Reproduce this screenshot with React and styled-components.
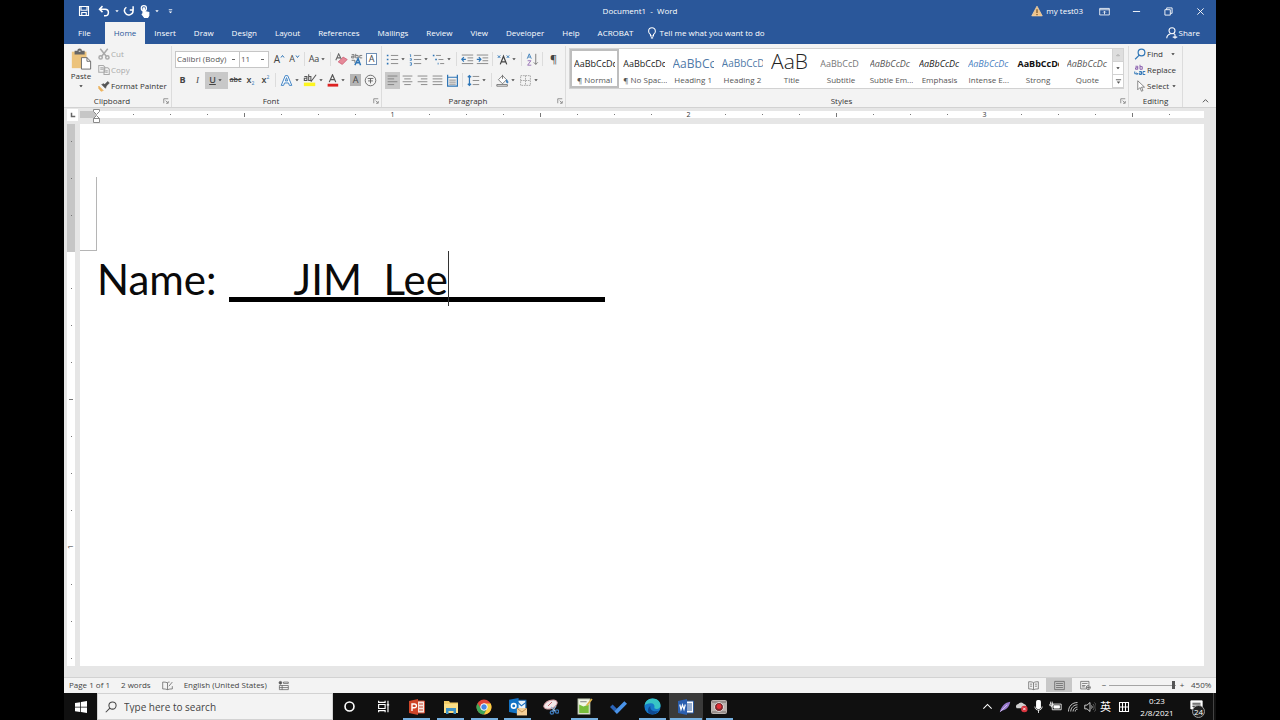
import React, { useState } from 'react'
import styled, { createGlobalStyle } from 'styled-components'

const tabs = ['File', 'Home', 'Insert', 'Draw', 'Design', 'Layout', 'References', 'Mailings', 'Review', 'View', 'Developer', 'Help', 'ACROBAT'];

const styleItems = [
  { name: '¶ Normal', sample: 'AaBbCcDc' },
  { name: '¶ No Spac...', sample: 'AaBbCcDc' },
  { name: 'Heading 1', sample: 'AaBbCc', size: 12, color: '#4f7aa8' },
  { name: 'Heading 2', sample: 'AaBbCcD', size: 10, color: '#4f7aa8' },
  { name: 'Title', sample: 'AaB', size: 21, color: '#222', weight: 300 },
  { name: 'Subtitle', sample: 'AaBbCcD', color: '#777' },
  { name: 'Subtle Em...', sample: 'AaBbCcDc', color: '#555', italic: true },
  { name: 'Emphasis', sample: 'AaBbCcDc', color: '#222', italic: true },
  { name: 'Intense E...', sample: 'AaBbCcDc', color: '#4a7fc1', italic: true },
  { name: 'Strong', sample: 'AaBbCcDc', color: '#111', weight: 700 },
  { name: 'Quote', sample: 'AaBbCcDc', color: '#555', italic: true },
];

const topMarks = Array.from({ length: 29 }, (_, i) => i + 1);
const sideMarks = Array.from({ length: 11 }, (_, i) => i + 1);

const Arrow = () => <ArrowSvg viewBox="0 0 8 8"><path d="M2.300 3.200h3.400L4 5.200z" /></ArrowSvg>;

const Launcher = () => (
  <Corner aria-label="More options">
    <Icon viewBox="0 0 8 8" $size={6}><path d="M1 7V1h6M3.500 3.500L6.500 6.500M7 4v3H4" /></Icon>
  </Corner>
);

const Lines = ({ d, blue, children }) => (
  <Icon viewBox="0 0 16 16" $size={13} $color="#777">
    <path d={d} />
    {blue && <path d={blue} stroke="#2e75b6" strokeWidth="2" />}
    {children}
  </Icon>
);

function TitleBar() {
  return (
    <Title>
      <Quick>
        <TopButton $w={20} aria-label="Save"><Icon viewBox="0 0 16 16" $size={12} $stroke={1.5}><path d="M2 2h12v12H2zM4 2v5h8V2M5 14v-4h6v4" /></Icon></TopButton>
        <TopButton $w={19} aria-label="Undo"><Icon viewBox="0 0 16 16" $size={12} $stroke={2}><path d="M6 1.500L2 5.500l4 4M2.500 5.500h7a4.400 4.400 0 0 1 0 8.800H8" /></Icon></TopButton>
        <Arrow />
        <TopButton $w={16} aria-label="Redo"><Icon viewBox="0 0 16 16" $size={12} $stroke={2}><path d="M13.500 1.500v5H9M4.500 3A5.600 5.600 0 1 0 13 6" /></Icon></TopButton>
        <TopButton $w={16} aria-label="Touch mode"><Icon viewBox="0 0 16 16" $size={13} $stroke={1.5}><circle cx="6" cy="4" r="3.200" /><path d="M5 12V4.500a1 1 0 0 1 2 0V8l5 1.200V13l-1.500 2.500H7L3.500 11z" fill="currentColor" /></Icon></TopButton>
        <Arrow />
        <TopButton $w={19} aria-label="Customize toolbar"><Icon viewBox="0 0 8 8" $size={7}><path d="M2 2h4" /><path d="M2 4h4L4 6z" fill="currentColor" stroke="none" /></Icon></TopButton>
      </Quick>
      <DocTitle>Document1&nbsp; -&nbsp; Word</DocTitle>
      <WindowControls>
        <Icon viewBox="0 0 16 16" $size={12}><path d="M8 1.500L15 14.500H1z" fill="#f0c48a" stroke="#f5d5a8" /><path d="M8 5.500v5M8 12v1.500" stroke="#6b4a22" strokeWidth="1.500" /></Icon>
        <User>my test03</User>
        <TopButton $w={32} aria-label="Ribbon display options"><Icon viewBox="0 0 16 12" $size={11} $stroke={1.2}><path d="M1 1.500h14v9.500H1zM1 3.500h14M8 10V6M6 7.500L8 5.500l2 2" /></Icon></TopButton>
        <TopButton $w={32} aria-label="Minimize"><Icon viewBox="0 0 10 10" $size={9}><path d="M1 5h8" /></Icon></TopButton>
        <TopButton $w={32} aria-label="Restore"><Icon viewBox="0 0 10 10" $size={9}><path d="M1 3h6v6H1zM3 3V1h6v6H7" /></Icon></TopButton>
        <TopButton $w={32} aria-label="Close"><Icon viewBox="0 0 10 10" $size={9}><path d="M1.500 1.500l7 7M8.500 1.500l-7 7" /></Icon></TopButton>
      </WindowControls>
    </Title>
  );
}

function Clipboard() {
  return (
    <Group $w={108}>
      <GroupBody>
        <PasteButton>
          <Icon viewBox="0 0 24 24" $size={22}>
            <path d="M2 4h16v18H2z" fill="#ecc37c" stroke="none" />
            <path d="M5 3h3a2.500 2.500 0 0 1 5 0h3v4H5z" fill="#666" stroke="none" />
            <path d="M9.500 3.500h2" stroke="#fff" />
            <path d="M12.500 10.500h6l4 4v8.500h-10z" fill="#fff" stroke="#666" />
            <path d="M18.500 10.500v4h4" stroke="#666" />
          </Icon>
          Paste
          <Arrow />
        </PasteButton>
        <Stack>
          <TextButton disabled>
            <Icon viewBox="0 0 16 16" $size={12} $stroke={2}><path d="M3 1l8 10M13 1L5 11" /><circle cx="3.500" cy="12.500" r="2.200" /><circle cx="12.500" cy="12.500" r="2.200" /></Icon>Cut
          </TextButton>
          <TextButton disabled>
            <Icon viewBox="0 0 16 16" $size={12} $stroke={1.4}><path d="M1 2h6l2 2v7H1zM3 5h4M3 7h4M8 5h5l2 2v7H8zM10 9h3M10 11h3" /></Icon>Copy
          </TextButton>
          <TextButton>
            <Icon viewBox="0 0 16 16" $size={12}><path d="M1 8l6 6-3 1-3-4z" fill="#ecb35f" stroke="#ecb35f" /><path d="M5 6l5 5 1-3-3-3zM9 6l4-4 2 2-4 4z" fill="#555" stroke="#555" /></Icon>Format Painter
          </TextButton>
        </Stack>
      </GroupBody>
      <GroupLabel>Clipboard<Launcher /></GroupLabel>
    </Group>
  );
}

function FontGroup() {
  return (
    <Group $w={210}>
      <Rows>
        <Row>
          <Combo $w={65} aria-label="Font" defaultValue="Calibri (Body)"><option>Calibri (Body)</option></Combo>
          <Combo $w={29} aria-label="Font size" defaultValue="11"><option>11</option></Combo>
          <Tool aria-label="Grow font"><Letter $size={10}>A</Letter><Caps viewBox="0 0 5 5"><path d="M1 3.500l1.500-2 1.500 2" /></Caps></Tool>
          <Tool aria-label="Shrink font"><Letter $size={9}>A</Letter><Caps viewBox="0 0 5 5"><path d="M1 1.500l1.500 2 1.500-2" /></Caps></Tool>
          <Sep />
          <Tool $w={20} aria-label="Change case"><Letter $size={9}>Aa</Letter><Arrow /></Tool>
          <Sep />
          <Tool aria-label="Clear formatting"><Icon viewBox="0 0 16 16" $size={13}><path d="M4 11l6-6 5 3-6 6z" fill="#e58a99" stroke="#cf5f75" /><path d="M1 9L4.500 1l3 6M2.500 6h4" stroke="#666" strokeWidth="1.300" /></Icon></Tool>
          <Tool aria-label="Phonetic guide"><Icon viewBox="0 0 16 16" $size={13}><path d="M2 2h3v4H2V4h3M7 1v5h3V3H7M15 3h-3v3h3" stroke="#666" /><path d="M6 15l4-8 3 8M8 12h4" stroke="#2e75b6" strokeWidth="1.800" /><path d="M2 9h4v3" stroke="#666" /></Icon></Tool>
          <Tool aria-label="Character border"><Boxed>A</Boxed></Tool>
        </Row>
        <Row>
          <Tool aria-label="Bold"><Letter $weight={700}>B</Letter></Tool>
          <Tool aria-label="Italic"><Letter $italic $serif>I</Letter></Tool>
          <Tool $w={23} $active aria-label="Underline"><Letter $underline $weight={600}>U</Letter><Arrow /></Tool>
          <Tool aria-label="Strikethrough"><Letter $size={7} $strike $weight={600}>abc</Letter></Tool>
          <Tool aria-label="Subscript"><Letter $weight={600}>x</Letter><Sub>2</Sub></Tool>
          <Tool aria-label="Superscript"><Letter $weight={600}>x</Letter><Sup>2</Sup></Tool>
          <Sep />
          <Tool $w={23} aria-label="Text effects"><Icon viewBox="0 0 16 16" $size={13} $color="#3f83c4" $stroke={1.2}><path d="M1.500 14L6.500 2h3l5 12h-3l-1-3h-5l-1 3zM6.500 8.500h3L8 4.500z" fill="#fff" /></Icon><Arrow /></Tool>
          <Tool $w={23} aria-label="Highlight"><Icon viewBox="0 0 16 16" $size={14} $color="#555"><path d="M1 11h13v4H1z" fill="#fdf51f" stroke="none" /><path d="M1.500 4h3v4.500h-3V6h3M6.500 1.500v7h2.500V4H6.500M9 10l6-8" strokeWidth="1.200" /></Icon><Arrow /></Tool>
          <Tool $w={23} aria-label="Font color"><Icon viewBox="0 0 16 16" $size={13} $color="#555" $stroke={1.5}><path d="M4 10l4-9 4 9M5.500 7h5" /><path d="M2 12h13v3.500H2z" fill="#d22" stroke="none" /></Icon><Arrow /></Tool>
          <Tool aria-label="Character shading"><Boxed $shade>A</Boxed></Tool>
          <Tool aria-label="Enclose characters"><Icon viewBox="0 0 16 16" $size={13} $color="#555"><circle cx="8" cy="8" r="6.500" /><path d="M4.500 5.500h7M5 8.500h6M8 5.500v6" /></Icon></Tool>
        </Row>
      </Rows>
      <GroupLabel>Font<Launcher /></GroupLabel>
    </Group>
  );
}

function ParagraphGroup() {
  return (
    <Group $w={184}>
      <Rows>
        <Row>
          <Tool $w={23} aria-label="Bullets"><Lines d="M6 3h9M6 8h9M6 13h9" blue="M1 3h2M1 8h2M1 13h2" /><Arrow /></Tool>
          <Tool $w={23} aria-label="Numbering"><Lines d="M6 3h9M6 8h9M6 13h9"><path d="M1 2h1v3M1 7h2v2H1M1 12h2v3H1" stroke="#2e75b6" /></Lines><Arrow /></Tool>
          <Tool $w={23} aria-label="Multilevel list"><Lines d="M5 3h6M8 8h6M10 13h5" blue="M1 3h2M4 8h2M7 13h1" /><Arrow /></Tool>
          <Sep />
          <Tool aria-label="Decrease indent"><Lines d="M1 2.500h14M8 6h7M8 9.500h7M1 13h14"><path d="M6 7.800H1M3.500 5L1 7.800l2.500 2.800" stroke="#2e75b6" strokeWidth="1.500" /></Lines></Tool>
          <Tool aria-label="Increase indent"><Lines d="M1 2.500h14M8 6h7M8 9.500h7M1 13h14"><path d="M1 7.800h5M3.500 5L6 7.800l-2.500 2.800" stroke="#2e75b6" strokeWidth="1.500" /></Lines></Tool>
          <Sep />
          <Tool $w={23} aria-label="Asian layout"><Lines><path d="M4 14l4-10 4 10M5.500 11h5" stroke="#444" strokeWidth="1.500" /><path d="M1 3l3 3M4 3L1 6M12 3l3 3M15 3l-3 3" stroke="#2e75b6" strokeWidth="1.200" /></Lines><Arrow /></Tool>
          <Sep />
          <Tool aria-label="Sort"><Icon viewBox="0 0 16 16" $size={13} $color="#666"><path d="M12 1v13M9.500 11.500L12 14l2.500-2.500" /><path d="M1.500 7L4 1l2.500 6M2.500 5h3" stroke="#2e75b6" /><path d="M2 9.500h4L2 15h4.500" stroke="#8a5fae" /></Icon></Tool>
          <Sep />
          <Tool aria-label="Show marks"><Letter $size={11}>¶</Letter></Tool>
        </Row>
        <Row>
          <Tool $active aria-label="Align left"><Lines d="M2 2.500h12M2 6h8M2 9.500h12M2 13h8" /></Tool>
          <Tool aria-label="Center"><Lines d="M2 2.500h12M4 6h8M2 9.500h12M4 13h8" /></Tool>
          <Tool aria-label="Align right"><Lines d="M2 2.500h12M6 6h8M2 9.500h12M6 13h8" /></Tool>
          <Tool aria-label="Justify"><Lines d="M2 2.500h12M2 6h12M2 9.500h12M2 13h12" /></Tool>
          <Tool aria-label="Distribute"><Lines d="M4 7.500h8M4 10h8M4 12.500h8"><path d="M2 1v14h12V1M2 4h12" stroke="#2e75b6" strokeWidth="1.500" /></Lines></Tool>
          <Sep />
          <Tool $w={23} aria-label="Line spacing"><Lines d="M7 3h8M7 8h8M7 13h8"><path d="M3 2v12M1 4l2-2 2 2M1 12l2 2 2-2" stroke="#2e75b6" strokeWidth="1.500" /></Lines><Arrow /></Tool>
          <Sep />
          <Tool $w={23} aria-label="Shading"><Icon viewBox="0 0 16 16" $size={13} $color="#666"><path d="M3 7l5-5 5 5-5 5z" fill="#fff" /><path d="M8 1v5" /><path d="M13 7c2 2 2 4 1 4s-1.500-2-1-4" fill="#2e75b6" stroke="#2e75b6" /><path d="M1 13h13v2H1z" /></Icon><Arrow /></Tool>
          <Tool $w={23} aria-label="Borders"><Icon viewBox="0 0 16 16" $size={13} $color="#999"><path d="M2 2h12v12H2zM8 2v12M2 8h12" strokeDasharray="2 1" /></Icon><Arrow /></Tool>
        </Row>
      </Rows>
      <GroupLabel>Paragraph<Launcher /></GroupLabel>
    </Group>
  );
}

function StylesGroup() {
  return (
    <Group $grow>
      <Gallery>
        {styleItems.map((item, i) => (
          <StyleCard key={item.name} $selected={i === 0}>
            <Sample $size={item.size} $color={item.color} $weight={item.weight} $italic={item.italic}>{item.sample}</Sample>
            <StyleName>{item.name}</StyleName>
          </StyleCard>
        ))}
        <GalleryScroll>
          <ScrollButton $off aria-label="Scroll up"><Icon viewBox="0 0 8 8" $size={6} $color="#aaa"><path d="M2 5l2-2 2 2z" /></Icon></ScrollButton>
          <ScrollButton aria-label="Scroll down"><Arrow /></ScrollButton>
          <ScrollButton aria-label="More styles"><Icon viewBox="0 0 8 8" $size={7} $color="#555"><path d="M1 2h6" /><path d="M2 4h4L4 6.500z" fill="#555" stroke="none" /></Icon></ScrollButton>
        </GalleryScroll>
      </Gallery>
      <GroupLabel>Styles<Launcher /></GroupLabel>
    </Group>
  );
}

function EditingGroup() {
  return (
    <Group $w={54}>
      <GroupBody>
        <Stack $pad>
          <TextButton><Icon viewBox="0 0 16 16" $size={12} $color="#2e75b6" $stroke={1.6}><circle cx="10" cy="6" r="4.500" /><path d="M7 9.500L1.500 15" /></Icon>Find<Gap /><Arrow /></TextButton>
          <TextButton><Icon viewBox="0 0 16 16" $size={12} $color="#666"><path d="M2 3h3v4H2V5h3M8 1v6h3V3.500H8" stroke="#8a5fae" strokeWidth="1.300" /><path d="M7 10h3v4H7v-2h3M15 10h-3v4h3M1 10v3h4M3.500 11.500L5 13l-1.500 1.500" stroke="#2e75b6" strokeWidth="1.300" /></Icon>Replace</TextButton>
          <TextButton><Icon viewBox="0 0 16 16" $size={12} $color="#666"><path d="M5 1v12l3-3 2 5 2-1-2-4.500h4z" fill="#fff" /></Icon>Select<Arrow /></TextButton>
        </Stack>
      </GroupBody>
      <GroupLabel $plain>Editing</GroupLabel>
    </Group>
  );
}

function StatusBar() {
  return (
    <Status>
      <StatusText>Page 1 of 1</StatusText>
      <StatusText>2 words</StatusText>
      <Icon viewBox="0 0 16 14" $size={11} $color="#555"><path d="M8 3v10M8 3C6 2 3 2 1 2v10c2 0 5 0 7 1 2-1 5-1 7-1V8M8 3c1-1 2-1 3-1M10 8l5-6" /></Icon>
      <StatusText>English (United States)</StatusText>
      <Icon viewBox="0 0 16 14" $size={11} $color="#555"><circle cx="3.500" cy="3" r="2" fill="#555" /><path d="M8 2h7v2H8zM2 7h13v6H2zM2 10h13M6 7v6" /></Icon>
      <Spacer />
      <Views>
        <ViewButton aria-label="Read mode"><Icon viewBox="0 0 16 14" $size={11} $color="#555"><path d="M8 3v10M8 3C6 1.500 3 1.500 1 1.500V12c2 0 5 0 7 1 2-1 5-1 7-1V1.500c-2 0-5 0-7 1.500M3 5h3M3 8h3M10 5h3M10 8h3" /></Icon></ViewButton>
        <ViewButton $active aria-label="Print layout"><Icon viewBox="0 0 16 14" $size={11} $color="#555"><path d="M1 1h14v12H1zM3 4h10M3 7h10M3 10h10" /></Icon></ViewButton>
        <ViewButton aria-label="Web layout"><Icon viewBox="0 0 16 14" $size={11} $color="#555"><path d="M9 12H1V1h12v5M3 4h8M3 7h5M3 9h4" /><circle cx="12" cy="10" r="3" /><path d="M12 7v6M9 10h6" /></Icon></ViewButton>
      </Views>
      <ZoomButton aria-label="Zoom out">−</ZoomButton>
      <ZoomRange type="range" min="10" max="500" defaultValue="490" aria-label="Zoom" />
      <ZoomButton aria-label="Zoom in">+</ZoomButton>
      <ZoomText>450%</ZoomText>
    </Status>
  );
}

function Taskbar() {
  return (
    <Bar>
      <Start aria-label="Start"><Icon viewBox="0 0 16 16" $size={12}><path d="M0 2.500l7-1v6H0zM8 1.300L16 0v7.500H8zM0 8.500h7v6l-7-1zM8 8.500h8V16l-8-1.300z" fill="#fff" stroke="none" /></Icon></Start>
      <Search>
        <Icon viewBox="0 0 16 16" $size={12} $color="#444" $stroke={1.4}><circle cx="10" cy="6" r="4.800" /><path d="M6.500 9.500L1 15" /></Icon>
        <SearchInput type="text" placeholder="Type here to search" aria-label="Type here to search" />
      </Search>
      <Apps>
        <TaskApp aria-label="Cortana"><Icon viewBox="0 0 16 16" $size={13} $stroke={2}><circle cx="8" cy="8" r="5.500" /></Icon></TaskApp>
        <TaskApp aria-label="Task view"><Icon viewBox="0 0 16 16" $size={13} $stroke={1.4}><path d="M2 1v2h8V1M2 5.500h8v5H2zM2 15v-2h8v2M13.500 1v14M12 6h3" /></Icon></TaskApp>
        <TaskApp $open aria-label="PowerPoint"><Icon viewBox="0 0 16 16" $size={16}><path d="M8 2h7.500v12H8z" fill="#f6e6e0" stroke="#c8442c" /><path d="M10 5h4M10 8h4M10 11h4" stroke="#c8442c" /><path d="M0 2l9-2v16l-9-2z" fill="#cf4528" stroke="none" /><path d="M3 12V5h2.500a1.800 1.800 0 0 1 0 3.800H3" stroke="#fff" strokeWidth="1.400" /></Icon></TaskApp>
        <TaskApp $open aria-label="File Explorer"><Icon viewBox="0 0 16 16" $size={16}><path d="M1 2h5l1 1.500h8V14H1z" fill="#f3cd67" stroke="none" /><path d="M1 5h14v9H1z" fill="#fbdf87" stroke="none" /><path d="M3 9h10v6h-2.500v-3h-5v3H3z" fill="#3f93c8" stroke="none" /></Icon></TaskApp>
        <TaskApp $open aria-label="Chrome"><Icon viewBox="0 0 16 16" $size={16}><circle cx="8" cy="8" r="7.500" fill="#e2463a" stroke="none" /><path d="M1.500 4.200A7.500 7.500 0 0 0 8 15.500L11 9.800 8 11.500 5 9.800z" fill="#3fa657" stroke="none" /><path d="M8 15.500A7.500 7.500 0 0 0 14.700 4.600H8l3 5.200z" fill="#f8d043" stroke="none" /><circle cx="8" cy="8" r="3.300" fill="#4588e6" stroke="#fff" /></Icon></TaskApp>
        <TaskApp $open aria-label="Outlook"><Icon viewBox="0 0 16 16" $size={18}><path d="M7 2h8v8H7z" fill="#e9f3fb" stroke="#1b6fbd" /><path d="M8 4l3 3 4-3" stroke="#1b6fbd" /><path d="M0 1.500L8.500 0v14L0 12.500z" fill="#1272c4" stroke="none" /><circle cx="4.200" cy="7" r="2" stroke="#fff" strokeWidth="1.400" /><path d="M7 9h9v6.500H7z" fill="#f5cf98" stroke="none" /><path d="M7 9l4.500 3.500L16 9" stroke="#b98644" strokeWidth=".800" /></Icon></TaskApp>
        <TaskApp aria-label="Snipping Tool"><Icon viewBox="0 0 16 16" $size={16}><ellipse cx="7.500" cy="5.500" rx="7" ry="4" fill="#f3e9ea" stroke="#d9a0a6" transform="rotate(-22 7.500 5.500)" /><path d="M5 7l4-4" stroke="#c9666f" /><path d="M8 8l5 5M13 7l-4 6" stroke="#9db9d6" strokeWidth="1.300" /><circle cx="9" cy="13.500" r="1.700" stroke="#3a75b5" strokeWidth="1.300" /><circle cx="14" cy="12.500" r="1.700" stroke="#3a75b5" strokeWidth="1.300" /></Icon></TaskApp>
        <TaskApp $open aria-label="Notes"><Icon viewBox="0 0 16 16" $size={17}><path d="M2 1h11v14H2z" fill="#f3f6e8" stroke="#ccd5bb" /><path d="M3 6l4 2 5-2v8H3z" fill="#78bd3b" stroke="none" /><path d="M4 3.500h6" stroke="#888" /><path d="M10 7l5-6" stroke="#e0b24a" strokeWidth="1.600" /></Icon></TaskApp>
        <TaskApp aria-label="To Do"><Icon viewBox="0 0 16 16" $size={17}><path d="M0 8.500l2.500-2.500L6.500 10l-2.500 2.500z" fill="#2a63b8" stroke="none" /><path d="M4 12.500L13.500 3 16 5.500l-9.500 9.500z" fill="#4a93e8" stroke="none" /></Icon></TaskApp>
        <TaskApp $open aria-label="Edge"><Icon viewBox="0 0 16 16" $size={17}><circle cx="8" cy="8" r="7.600" fill="#1678c9" stroke="none" /><path d="M.500 7.500C1 3 4 .400 8 .400c5 0 7.600 3.400 7.600 6.400 0 2.200-1.600 3.500-3.600 3.500-1.600 0-2.600-.600-2.200-1.500C10.300 7 9 5 6.500 5 3.500 5 1 6 .500 7.500z" fill="#37c4c5" stroke="none" /><path d="M6 7.500c-.500 4 3 6 8 4.500-2 2.500-5 4-8 3-3-1-3-6 0-7.500z" fill="#0e4a94" stroke="none" /></Icon></TaskApp>
        <TaskApp $open $current aria-label="Word"><Icon viewBox="0 0 16 16" $size={16}><path d="M8 2h7.500v12H8z" fill="#fff" stroke="#2a579a" /><path d="M9 5h5M9 7h5M9 9h5M9 11h5" stroke="#2a579a" /><path d="M0 2l9-2v16l-9-2z" fill="#2b5fb0" stroke="none" /><path d="M1.800 5.500L3 10.500l1.500-4.500L6 10.500l1.300-5" stroke="#fff" strokeWidth="1.200" /></Icon></TaskApp>
        <TaskApp $open aria-label="Recorder"><Icon viewBox="0 0 16 16" $size={16}><rect x="0" y="1" width="16" height="14" rx="2" fill="#b9b2ae" stroke="none" /><path d="M1 3h14M1 13h14" stroke="#776c6a" /><circle cx="8" cy="8" r="4.500" fill="#7e2a2d" stroke="#ddd" /><circle cx="8" cy="7.500" r="2.400" fill="#e32f36" stroke="none" /></Icon></TaskApp>
      </Apps>
      <Spacer />
      <Tray>
        <TrayItem><Icon viewBox="0 0 16 16" $size={11} $stroke={1.6}><path d="M2 11l6-6 6 6" /></Icon></TrayItem>
        <TrayItem><Icon viewBox="0 0 16 16" $size={12}><path d="M1 15C3 7 8 2 15 1c-1 7-6 11-11 12z" fill="#9b7bd0" stroke="none" /><path d="M2 14l9-9" stroke="#e2d8f2" /></Icon></TrayItem>
        <TrayItem><Icon viewBox="0 0 16 16" $size={13}><path d="M2 10a3 3 0 0 1 2-5 4 4 0 0 1 7 0 3 3 0 0 1 2 5z" fill="#d0d0d0" stroke="none" /><circle cx="11.500" cy="11" r="4" fill="#d8323c" stroke="none" /><path d="M10 9.500l3 3M13 9.500l-3 3" stroke="#fff" /></Icon></TrayItem>
        <TrayItem><Icon viewBox="0 0 16 16" $size={13}><rect x="5" y="0" width="6" height="11" rx="2" fill="#fff" stroke="none" /><path d="M3.500 8c0 6 9 6 9 0M8 12v4" /></Icon></TrayItem>
        <TrayItem><Icon viewBox="0 0 16 16" $size={13}><path d="M4 5h11v7H4zM2 2v3M4 2v3M1 5h4v2H1zM3 7v2" /><path d="M6 7h7v3H6z" fill="#fff" /></Icon></TrayItem>
        <TrayItem><Icon viewBox="0 0 16 16" $size={12}><path d="M2 14C2 7 7 2 14 2M5 14c0-5 4-9 9-9M8 14c0-3 3-6 6-6M11 14c0-2 1-3 3-3" /></Icon></TrayItem>
        <TrayItem><Icon viewBox="0 0 16 16" $size={12}><path d="M1 5.500h3L8 2v12l-4-3.500H1zM10 6c1 1 1 3 0 4" /><path d="M12 4c2 2 2 6 0 8M14 2c3 3 3 9 0 12" stroke="#777" /></Icon></TrayItem>
        <TrayItem $w={15}>英</TrayItem>
        <TrayItem $w={21}><Icon viewBox="0 0 16 16" $size={12} $stroke={1.4}><path d="M2 2h12v12H2zM2 8h12M6 2v12M10 2v12" /></Icon></TrayItem>
        <Clock><span>0:23</span><span>2/8/2021</span></Clock>
        <Notify aria-label="Notifications">
          <Icon viewBox="0 0 16 16" $size={13}><path d="M1 1h14v10H7l-3 3v-3H1z" fill="#fff" /><path d="M3 4h10M3 6h10M3 8h7" stroke="#222" /></Icon>
          <Badge>24</Badge>
        </Notify>
      </Tray>
    </Bar>
  );
}

function App() {
  const [active, setActive] = useState('Home');

  return <>
    <GlobalStyle />
    <Screen>
      <TitleBar />
      <TabBar>
        {tabs.map((tab) => (
          <Tab key={tab} $file={tab === 'File'} $active={tab === active} onClick={() => setActive(tab)}>{tab}</Tab>
        ))}
        <Tell>
          <Icon viewBox="0 0 16 16" $size={12} $stroke={1.4}><path d="M6 12V10C4.500 9 3.500 7.500 3.500 5.500a4.500 4.500 0 0 1 9 0C12.500 7.500 11.500 9 10 10v2zM6.500 14.500h3" /></Icon>
          Tell me what you want to do
        </Tell>
        <Spacer />
        <Share>
          <Icon viewBox="0 0 16 16" $size={12} $stroke={1.4}><circle cx="8" cy="5" r="4" /><path d="M1 15c0-3 2-5 5-6M10 9c1 0 2 1 2.500 2M9 13.500h6M12 10.500v5" /></Icon>
          Share
        </Share>
      </TabBar>
      <Ribbon>
        <Clipboard />
        <FontGroup />
        <ParagraphGroup />
        <StylesGroup />
        <EditingGroup />
        <Collapse aria-label="Collapse ribbon"><Icon viewBox="0 0 8 8" $size={7} $color="#444"><path d="M1 6l3-3 3 3" /></Icon></Collapse>
      </Ribbon>
      <Workspace>
        <RulerCorner><TabStop><Icon viewBox="0 0 8 8" $size={6} $color="#666" $stroke={2}><path d="M2 1v5h5" /></Icon></TabStop></RulerCorner>
        <TopRuler>
          <TopMargin>
            <Indent viewBox="0 0 7 14"><path d="M.500.500h6v2L3.500 5.500l-3-3zM3.500 6.500l3 3h-6zM.500 9.500h6v4h-6z" /></Indent>
          </TopMargin>
          <TopTicks>
            {topMarks.map((n) => <TopMark key={n}>{n % 8 === 0 ? n / 8 : <Tick $long={n % 4 === 0} />}</TopMark>)}
          </TopTicks>
        </TopRuler>
        <SideRuler>
          <SideMargin><SideMark><SideTick /></SideMark><SideMark><SideTick /></SideMark><SideMark><SideTick /></SideMark></SideMargin>
          <SideTicks>
            {sideMarks.map((n) => <SideMark key={n}>{n % 8 === 0 ? <SideNumber>{n / 8}</SideNumber> : <SideTick $long={n % 4 === 0} />}</SideMark>)}
          </SideTicks>
        </SideRuler>
        <Page>
          <CropMark />
          <Line>
            Name:
            <Blank>JIM  Lee<Caret /></Blank>
          </Line>
        </Page>
      </Workspace>
      <StatusBar />
      <Taskbar />
    </Screen>
  </>
}

export default App

const GlobalStyle = createGlobalStyle`
    * { box-sizing: border-box; }
    body {
        margin: 0;
        background: #000;
        font-family: "Open Sans", "Noto Sans CJK TC", sans-serif;
        font-size: 8px;
        line-height: 12px;
        color: #333;
    }
    button, input, select {
        font: inherit;
        color: inherit;
        border: 0;
        padding: 0;
        margin: 0;
        background: none;
    }
`;
const Screen = styled.div`
    min-height: 100vh;
    padding: 0 5%;
    display: flex;
    flex-direction: column;
`;
const Icon = styled.svg`
    width: ${(p) => p.$size}px;
    height: ${(p) => p.$size}px;
    color: ${(p) => p.$color || 'inherit'};
    fill: none;
    stroke: currentColor;
    stroke-width: ${(p) => p.$stroke || 1};
    flex: none;
`;
const ArrowSvg = styled.svg`
    width: 8px;
    height: 8px;
    fill: currentColor;
    flex: none;
`;
const Caps = styled.svg`
    width: 5px;
    height: 5px;
    margin-bottom: 6px;
    fill: none;
    stroke: #2e75b6;
    flex: none;
`;
const Spacer = styled.div`
    flex: 1;
`;

/* title bar and tabs */
const Title = styled.header`
    height: 22px;
    display: grid;
    grid-template-columns: 1fr auto 1fr;
    align-items: center;
    background: #2a579a;
    color: #fff;
`;
const Quick = styled.div`
    display: flex;
    align-items: center;
    padding-left: 10px;
`;
const TopButton = styled.button`
    width: ${(p) => p.$w}px;
    height: 22px;
    display: flex;
    align-items: center;
    justify-content: center;
`;
const DocTitle = styled.div`
    white-space: nowrap;
`;
const WindowControls = styled.div`
    display: flex;
    align-items: center;
    justify-content: flex-end;
`;
const User = styled.span`
    margin: 0 5px 0 3px;
`;
const TabBar = styled.nav`
    height: 22px;
    display: flex;
    align-items: stretch;
    background: #2a579a;
    color: #fff;
`;
const Tab = styled.button`
    padding: ${(p) => (p.$file ? '0 14px' : '0 9px')};
    white-space: nowrap;
    ${(p) => p.$active && `
        background: #f3f3f3;
        color: #2a579a;
    `}
`;
const Tell = styled.button`
    display: flex;
    align-items: center;
    gap: 1px;
    padding-left: 4px;
`;
const Share = styled(Tell)`
    padding-right: 16px;
`;

/* ribbon */
const Ribbon = styled.section`
    height: 64px;
    padding-top: 2px;
    display: flex;
    background: #f3f3f3;
    border-bottom: 1px solid #d2d2d2;
`;
const Group = styled.div`
    flex: ${(p) => (p.$grow ? '1 1 0' : `0 0 ${p.$w}px`)};
    min-width: 0;
    display: flex;
    flex-direction: column;
    border-right: 1px solid #dcdcdc;
`;
const GroupBody = styled.div`
    height: 48px;
    display: flex;
`;
const GroupLabel = styled.div`
    height: 13px;
    position: relative;
    padding-right: ${(p) => (p.$plain ? '0' : '11px')};
    text-align: center;
    line-height: 14px;
`;
const Corner = styled.button`
    position: absolute;
    right: 2px;
    top: 4px;
    height: 6px;
    display: flex;
    color: #777;
`;
const PasteButton = styled.button`
    width: 34px;
    padding-top: 2px;
    display: flex;
    flex-direction: column;
    align-items: center;
`;
const Stack = styled.div`
    display: flex;
    flex-direction: column;
    padding-left: ${(p) => (p.$pad ? '5px' : '0')};
`;
const TextButton = styled.button`
    height: 16px;
    display: flex;
    align-items: center;
    gap: 1px;
    white-space: nowrap;
    &:disabled {
        color: #aaa;
    }
`;
const Gap = styled.span`
    width: 4px;
`;
const Rows = styled.div`
    height: 48px;
    padding: 3px 0 0 3px;
    display: flex;
    flex-direction: column;
    gap: 1px;
`;
const Row = styled.div`
    height: 20px;
    display: flex;
    align-items: center;
`;
const Combo = styled.select`
    width: ${(p) => p.$w}px;
    height: 17px;
    padding-left: 1px;
    border: 1px solid #c6c6c6;
    margin-right: ${(p) => (p.$w < 40 ? '3px' : '0')};
    border-left-width: ${(p) => (p.$w < 40 ? '0' : '1px')};
    appearance: none;
    background: #fff linear-gradient(#666, #666) no-repeat right 4px center / 3px 1px;
    color: #555;
`;
const Tool = styled.button`
    width: ${(p) => p.$w || 15}px;
    height: 17px;
    display: flex;
    align-items: center;
    justify-content: center;
    color: #444;
    background: ${(p) => (p.$active ? '#c8c8c8' : 'none')};
`;
const Sep = styled.i`
    width: 1px;
    height: 14px;
    margin: 0 3px 0 2px;
    background: #dcdcdc;
`;
const Letter = styled.span`
    font-size: ${(p) => p.$size || 9}px;
    font-weight: ${(p) => p.$weight || 400};
    font-style: ${(p) => (p.$italic ? 'italic' : 'normal')};
    font-family: ${(p) => (p.$serif ? '"Liberation Serif", serif' : 'inherit')};
    text-decoration: ${(p) => (p.$underline ? 'underline' : p.$strike ? 'line-through' : 'none')};
`;
const Sub = styled.sub`
    font-size: 5px;
    line-height: 5px;
    align-self: flex-end;
    padding-bottom: 3px;
    color: #2e75b6;
`;
const Sup = styled.sup`
    font-size: 5px;
    line-height: 5px;
    align-self: flex-start;
    padding-top: 3px;
    color: #2e75b6;
`;
const Boxed = styled.span`
    width: 11px;
    height: 12px;
    line-height: 10px;
    font-size: 9px;
    text-align: center;
    border: 1px solid ${(p) => (p.$shade ? '#b5b5b5' : '#6f8fb5')};
    background: ${(p) => (p.$shade ? '#b5b5b5' : '#fff')};
`;
const Gallery = styled.div`
    height: 41px;
    margin: 2px 4px 5px 3px;
    display: grid;
    grid-template-columns: repeat(11, 1fr) 11px;
    background: #fff;
    border: 1px solid #d2d2d2;
`;
const StyleCard = styled.button`
    min-width: 0;
    padding: 0 2px;
    overflow: hidden;
    display: flex;
    flex-direction: column;
    justify-content: flex-end;
    border: 2px solid ${(p) => (p.$selected ? '#bebebe' : 'transparent')};
`;
const Sample = styled.span`
    width: 100%;
    height: 21px;
    overflow: hidden;
    white-space: nowrap;
    text-align: left;
    line-height: ${(p) => (p.$size > 20 ? 17 : 21)}px;
    font-size: ${(p) => p.$size || 9}px;
    color: ${(p) => p.$color || '#222'};
    font-weight: ${(p) => p.$weight || 400};
    font-style: ${(p) => (p.$italic ? 'italic' : 'normal')};
`;
const StyleName = styled.span`
    width: 100%;
    text-align: center;
    white-space: nowrap;
    color: #555;
`;
const GalleryScroll = styled.div`
    display: grid;
    grid-template-rows: repeat(3, 1fr);
    border-left: 1px solid #d2d2d2;
`;
const ScrollButton = styled.button`
    display: flex;
    align-items: center;
    justify-content: center;
    border-bottom: 1px solid #d2d2d2;
    background: ${(p) => (p.$off ? '#dedede' : '#fff')};
`;
const Collapse = styled.button`
    flex: 0 0 33px;
    display: flex;
    align-items: flex-end;
    justify-content: flex-end;
    padding: 0 7px 3px 0;
`;

/* rulers and page */
const Workspace = styled.main`
    flex: 1;
    display: grid;
    grid-template-columns: 16px 1fr;
    grid-template-rows: 16px 1fr;
    padding: 0 12px 11px 0;
    background: #e6e6e6;
`;
const RulerCorner = styled.div`
    padding: 1px 3px;
`;
const TabStop = styled.div`
    width: 11px;
    height: 12px;
    display: flex;
    align-items: center;
    justify-content: center;
    background: #fff;
`;
const TopRuler = styled.div`
    height: 7px;
    margin-top: 3px;
    display: flex;
    background: #fff;
`;
const TopMargin = styled.div`
    width: 16px;
    position: relative;
    background: #c6c6c6;
`;
const Indent = styled.svg`
    position: absolute;
    right: -4px;
    top: -2px;
    width: 7px;
    height: 14px;
    fill: #fff;
    stroke: #8a8a8a;
`;
const TopTicks = styled.div`
    flex: 1;
    min-width: 0;
    overflow: hidden;
    padding-left: 19px;
    display: flex;
    align-items: center;
`;
const TopMark = styled.span`
    flex: 0 0 37px;
    display: flex;
    justify-content: center;
    font-size: 7px;
    line-height: 7px;
`;
const Tick = styled.i`
    width: 1px;
    height: ${(p) => (p.$long ? 4 : 1)}px;
    background: #777;
`;
const SideRuler = styled.div`
    width: 8px;
    margin-left: 3px;
    display: flex;
    flex-direction: column;
    background: #fff;
`;
const SideMargin = styled.div`
    height: 128px;
    display: flex;
    flex-direction: column;
    justify-content: flex-end;
    padding-bottom: 18px;
    overflow: hidden;
    background: #c6c6c6;
`;
const SideTicks = styled.div`
    flex: 1 1 0;
    padding-top: 18px;
    overflow: hidden;
`;
const SideMark = styled.span`
    flex: none;
    height: 37px;
    display: flex;
    align-items: center;
    justify-content: center;
`;
const SideTick = styled.i`
    width: ${(p) => (p.$long ? 4 : 1)}px;
    height: 1px;
    background: #777;
`;
const SideNumber = styled.span`
    writing-mode: sideways-lr;
    font-size: 7px;
    line-height: 8px;
`;
const Page = styled.article`
    background: #fff;
`;
const CropMark = styled.div`
    width: 17px;
    height: 74px;
    margin-top: 53px;
    border: solid #b5b5b5;
    border-width: 0 1px 1px 0;
`;
const Line = styled.p`
    margin: 0 0 0 17px;
    height: 54px;
    display: flex;
    font-family: Lato, sans-serif;
    font-size: 42px;
    line-height: 56px;
    color: #0a0a0a;
`;
const Blank = styled.span`
    width: 376px;
    height: 51px;
    margin-left: 12px;
    padding-left: 65px;
    display: flex;
    white-space: pre;
    border-bottom: 5px solid #000;
`;
const Caret = styled.i`
    width: 1px;
    height: 55px;
    background: #333;
`;

/* status bar */
const Status = styled.footer`
    height: 16px;
    display: flex;
    align-items: center;
    gap: 11px;
    padding: 0 5px 1px;
    background: #f3f3f3;
    border-top: 1px solid #d2d2d2;
    color: #444;
`;
const StatusText = styled.span`
    white-space: nowrap;
`;
const Views = styled.div`
    align-self: stretch;
    display: flex;
`;
const ViewButton = styled.button`
    width: 26px;
    display: flex;
    align-items: center;
    justify-content: center;
    background: ${(p) => (p.$active ? '#c8c8c8' : 'none')};
`;
const ZoomButton = styled.button`
    width: 8px;
    margin: 0 -10px 0 -9px;
`;
const ZoomRange = styled.input`
    appearance: none;
    width: 67px;
    height: 10px;
    background: linear-gradient(#a5a5a5, #a5a5a5) no-repeat center / 100% 1px;
    &::-webkit-slider-thumb {
        appearance: none;
        width: 3px;
        height: 8px;
        background: #555;
    }
`;
const ZoomText = styled.span`
    width: 20px;
    margin-left: 4px;
`;

/* taskbar */
const Bar = styled.div`
    height: 27px;
    display: flex;
    background: #101010;
    color: #fff;
`;
const Start = styled.button`
    width: 33px;
    display: flex;
    align-items: center;
    justify-content: center;
`;
const Search = styled.label`
    width: 236px;
    padding-left: 7px;
    display: flex;
    align-items: center;
    gap: 7px;
    background: #f3f3f3;
    border: 1px solid #d2d2d2;
`;
const SearchInput = styled.input`
    flex: 1;
    min-width: 0;
    font-size: 10px;
    color: #333;
    outline: none;
    &::placeholder {
        color: #444;
        opacity: 1;
    }
`;
const Apps = styled.div`
    flex: 0 0 35%;
    display: grid;
    grid-template-columns: repeat(12, 1fr);
`;
const TaskApp = styled.button`
    display: flex;
    align-items: center;
    justify-content: center;
    background:
        linear-gradient(#76b0e0, #76b0e0) no-repeat center bottom / ${(p) => (p.$current ? 32 : p.$open ? 27 : 0)}px 2px,
        ${(p) => (p.$current ? '#3a3a3a' : '#101010')};
`;
const Tray = styled.div`
    display: flex;
    align-items: center;
`;
const TrayItem = styled.span`
    width: ${(p) => p.$w || 17}px;
    display: flex;
    align-items: center;
    justify-content: center;
    font-size: 11px;
    line-height: 16px;
`;
const Clock = styled.time`
    width: 46px;
    display: flex;
    flex-direction: column;
    align-items: center;
`;
const Notify = styled.button`
    width: 34px;
    height: 27px;
    position: relative;
    display: flex;
    align-items: center;
    justify-content: center;
    border-right: 1px solid #444;
    margin-right: 2px;
`;
const Badge = styled.span`
    position: absolute;
    right: 8px;
    bottom: 2px;
    width: 13px;
    height: 13px;
    border: 1px solid #999;
    border-radius: 50%;
    background: #222;
    line-height: 11px;
    text-align: center;
`;
